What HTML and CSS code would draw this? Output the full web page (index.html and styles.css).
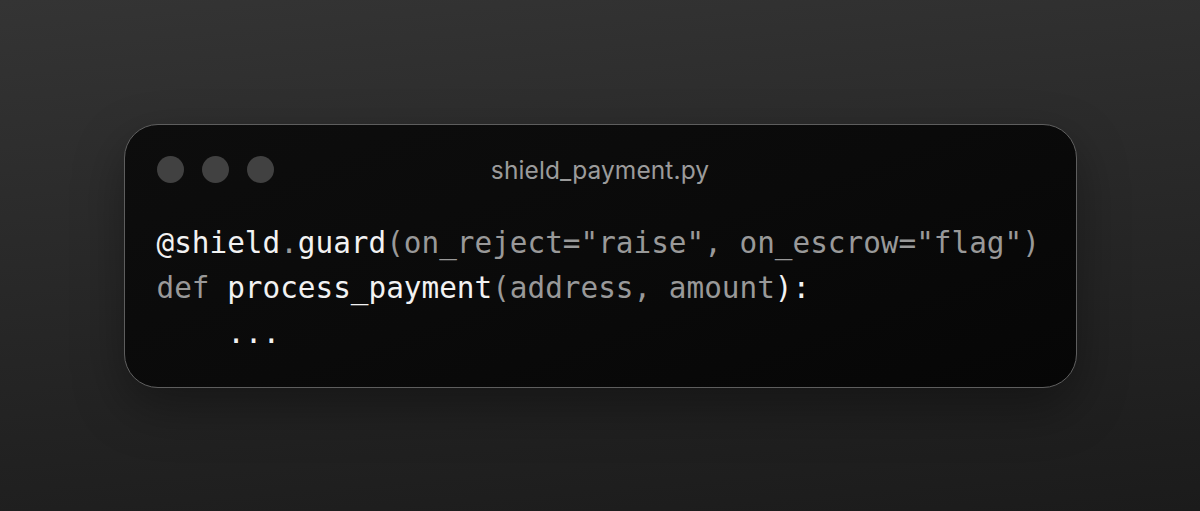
FILE: index.html
```html
<!DOCTYPE html>
<html>
<head>
<meta charset="utf-8">
<link rel="stylesheet" href="styles.css">
</head>
<body>
<main class="stage">
  <section class="window">
    <header class="titlebar">
      <div class="dots">
        <span class="dot"></span>
        <span class="dot"></span>
        <span class="dot"></span>
      </div>
      <div class="title">shield_payment.py</div>
      <div class="spacer"></div>
    </header>
    <pre class="code"><span class="hi">@shield</span><span class="lo">.</span><span class="hi">guard</span><span class="lo">(on_reject="raise", on_escrow="flag")</span>
<span class="lo">def</span> <span class="hi">process_payment</span><span class="lo">(address, amount</span><span class="hi">):</span>
    <span class="hi">...</span></pre>
  </section>
</main>
</body>
</html>
```
FILE: styles.css
```css
html, body {
  margin: 0;
  padding: 0;
  height: 100%;
}
body {
  background: linear-gradient(175deg, #343434 0%, #262626 55%, #1b1b1b 100%);
}
.stage {
  height: 511px;
  display: flex;
  align-items: center;
  justify-content: center;
}
.window {
  box-sizing: border-box;
  width: 953px;
  height: 264px;
  border: 1.5px solid #5e5e5e;
  border-radius: 34px;
  background: linear-gradient(160deg, #0d0d0d 0%, #0a0a0a 50%, #060606 100%);
  box-shadow: 0 20px 50px rgba(0, 0, 0, 0.35);
  padding: 30px 32px 30px 32px;
}
.titlebar {
  display: grid;
  grid-template-columns: 1fr auto 1fr;
  align-items: center;
  height: 28px;
}
.dots {
  display: flex;
  gap: 18px;
}
.dot {
  width: 27px;
  height: 27px;
  border-radius: 50%;
  background: #414141;
}
.title {
  font-family: Inter, "Noto Sans", sans-serif;
  font-size: 24.5px;
  color: #9b9b9b;
  letter-spacing: 0.1px;
}
.code {
  margin: 38px 0 0 0;
  font-family: "DejaVu Sans Mono", "Liberation Mono", monospace;
  font-size: 29.35px;
  line-height: 45px;
  color: #9a9a9a;
}
.hi {
  color: #f2f2f2;
}
.lo {
  color: #999999;
}
```
